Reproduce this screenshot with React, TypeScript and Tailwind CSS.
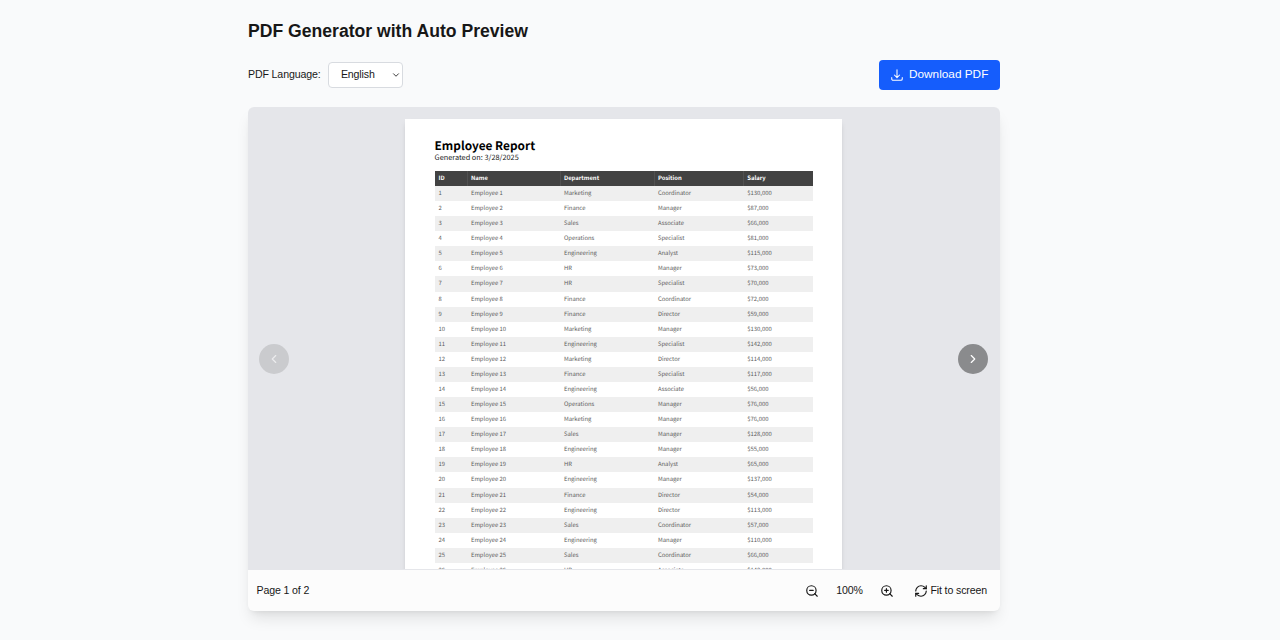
import { ChevronLeft, ChevronRight, ChevronDown, RefreshCw, ZoomIn, ZoomOut } from "lucide-react";

const departments = "Marketing,Finance,Sales,Operations,Engineering,HR,HR,Finance,Finance,Marketing,Engineering,Marketing,Finance,Engineering,Operations,Marketing,Sales,Engineering,HR,Engineering,Finance,Engineering,Sales,Engineering,Sales,HR".split(",");
const positions = "Coordinator,Manager,Associate,Specialist,Analyst,Manager,Specialist,Coordinator,Director,Manager,Specialist,Director,Specialist,Associate,Manager,Manager,Manager,Manager,Analyst,Manager,Director,Director,Coordinator,Manager,Coordinator,Associate".split(",");
const salaries = [130, 87, 66, 81, 115, 73, 70, 72, 59, 130, 142, 114, 117, 56, 76, 76, 128, 55, 65, 137, 54, 113, 57, 110, 66, 142];

const columns = "grid grid-cols-[32px_93px_94px_89.3px_1fr] items-start";

function Report() {
  return (
    <div className="ml-[157.4px] h-[618px] w-[437px] bg-white px-[29.2px] pt-[20px] font-['Noto_Sans_CJK_SC',sans-serif] shadow-md [text-rendering:geometricPrecision]">
      <h2 className="h-[13px] text-[11.85px] leading-[13px] font-bold text-black">Employee Report</h2>
      <p className="h-[19px] text-[7.35px] leading-[11px] text-[#222]">Generated on: 3/28/2025</p>
      <div className={`${columns} h-[15px] bg-[#424242] text-[5.88px] leading-[14px] font-bold text-white`}>
        <span className="h-[15px] pl-[4px]">ID</span>
        <span className="h-[15px] border-l border-[#505050] pl-[3.4px]">Name</span>
        <span className="h-[15px] border-l border-[#505050] pl-[3.4px]">Department</span>
        <span className="h-[15px] border-l border-[#505050] pl-[3.4px]">Position</span>
        <span className="h-[15px] border-l border-[#505050] pl-[3.4px]">Salary</span>
      </div>
      {salaries.map((salary, i) => (
        <div key={i} className={`${columns} h-[15.08px] text-[5.88px] leading-[14.4px] text-[#5c5c5c] odd:bg-white even:bg-[#efefef]`}>
          <span className="pl-[4px]">{i + 1}</span>
          <span className="pl-[4.4px]">Employee {i + 1}</span>
          <span className="pl-[4.4px]">{departments[i]}</span>
          <span className="pl-[4.4px]">{positions[i]}</span>
          <span className="pl-[4.4px]">${salary},000</span>
        </div>
      ))}
    </div>
  );
}

export default function App() {
  return (
    <div className="h-[640px] overflow-hidden bg-[#f9fafb] font-['Liberation_Sans',Arial,sans-serif] text-[#171717]">
      <main className="ml-[248px] w-[752px] pt-[18px]">
        <h1 className="text-[17.6px] leading-[26px] font-bold">PDF Generator with Auto Preview</h1>
        <div className="mt-[16px] flex h-[30px] items-center justify-between">
          <div className="flex items-center text-[10.6px] tracking-[-0.13px]">
            <span className="w-[80.4px]">PDF Language:</span>
            <button className="flex h-[26px] w-[75px] items-center justify-between rounded-[4px] border border-[#d8dbe0] bg-white pr-[1px] pl-[11.5px]">
              English
              <ChevronDown size={10} strokeWidth={2} />
            </button>
          </div>
          <button className="flex h-[29.5px] w-[121.5px] items-center rounded-[4px] bg-[#155dfc] pl-[11px] text-[11.8px] text-white">
            <svg className="mr-[5.5px]" width="14" height="14" viewBox="0 0 24 24" fill="none" stroke="currentColor" strokeWidth="1.8" strokeLinecap="round" strokeLinejoin="round">
              <path d="M3 16.5v2.25A2.25 2.25 0 0 0 5.25 21h13.5A2.25 2.25 0 0 0 21 18.75V16.5M16.5 12 12 16.5m0 0L7.5 12m4.5 4.5V3" />
            </svg>
            Download PDF
          </button>
        </div>
        <section className="mt-[17px] overflow-hidden rounded-[6px] bg-[#fcfcfc] shadow-lg">
          <div className="relative h-[463px] overflow-hidden border-b border-[#e5e6ea] bg-[#e5e6ea] pt-3">
            <Report />
            <button className="absolute top-[237px] left-[11px] flex size-[30px] items-center justify-center rounded-full bg-[#cacbce] text-[#ececee]">
              <ChevronLeft size={14} />
            </button>
            <button className="absolute top-[237px] right-[12px] flex size-[30px] items-center justify-center rounded-full bg-[#8a8b8d] text-white">
              <ChevronRight size={14} />
            </button>
          </div>
          <div className="flex h-[41px] items-center pr-[13px] pl-[8.5px] text-[10.6px] tracking-[-0.13px]">
            <span className="mr-auto">Page 1 of 2</span>
            <ZoomOut size={14} />
            <span className="mr-[17px] ml-[17.5px]">100%</span>
            <ZoomIn size={14} />
            <RefreshCw className="mr-[2.6px] ml-[20px]" size={14} />
            <span>Fit to screen</span>
          </div>
        </section>
      </main>
    </div>
  );
}
